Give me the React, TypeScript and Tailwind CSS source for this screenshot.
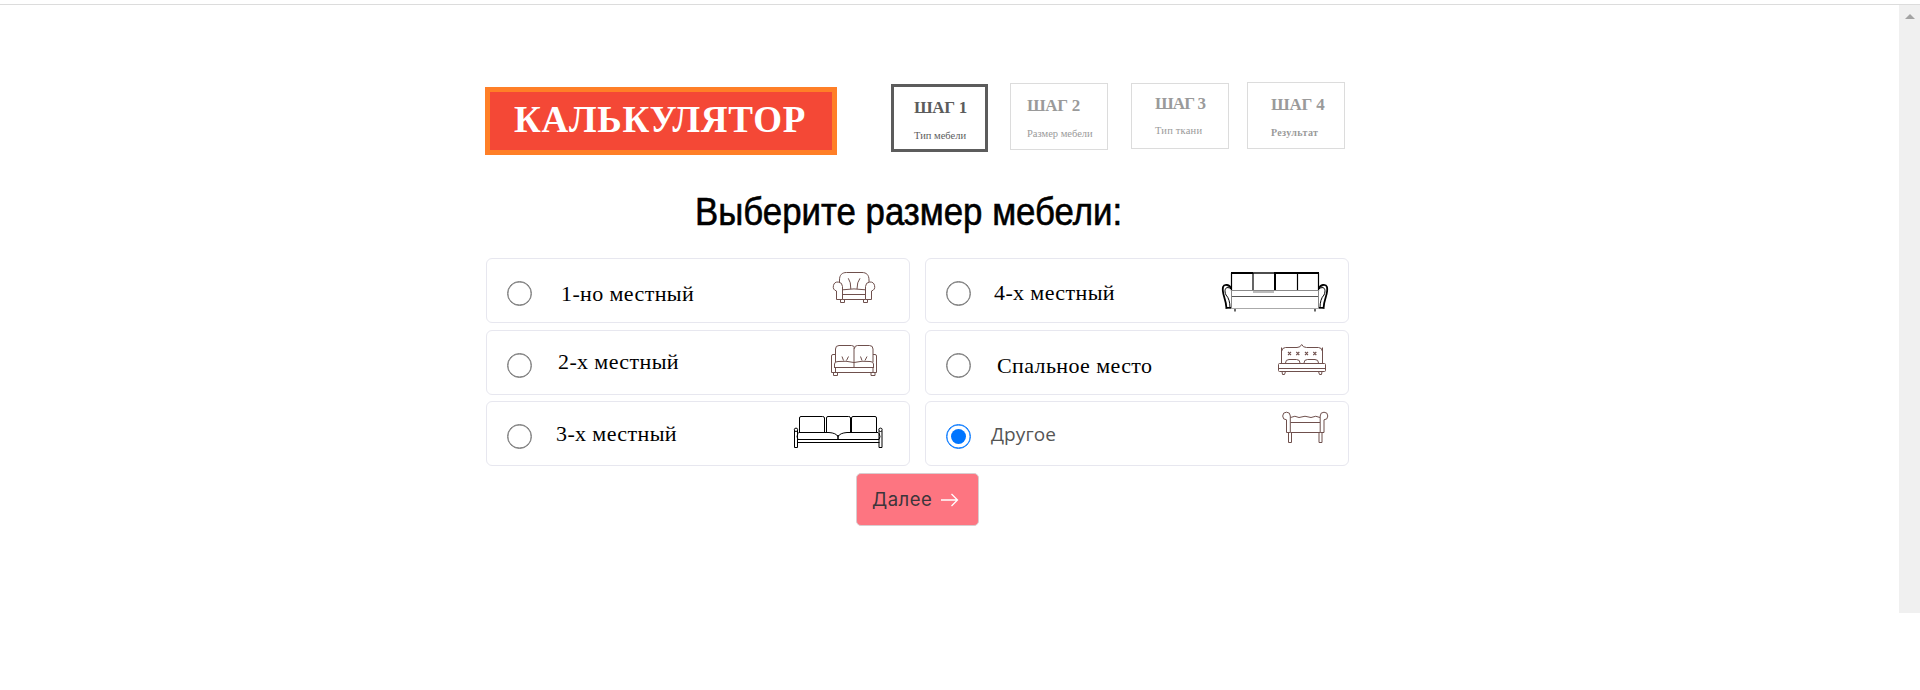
import { useState, type ReactNode } from "react";

const SERIF = "font-['Liberation_Serif',serif]";

function Armchair() {
  return (
    <svg width="44" height="33" viewBox="0 0 44 33" fill="none" stroke="#6f504d" strokeWidth="1">
      <path d="M7.500 11V9C7.500 4 10 1.500 14.500 1.500H30C34.500 1.500 37 4 37 9v2" />
      <path d="M4.500 20A4.600 4.600 0 1 1 10.500 15.500V28.500H4.500V20" />
      <path d="M39.500 20A4.600 4.600 0 1 0 33.500 15.500V28.500H39.500V20" />
      <path d="M10.500 18.800Q22 17 33.500 18.800M10.500 23.500H33.500M10.500 28.500H33.500" />
      <path d="M16.300 7.300Q19 11 18.800 18M28 7.300Q25 11 25 18" />
      <path d="M8.500 28.500V31.500H12.500V28.500M31.500 28.500V31.500H35.500V28.500" />
    </svg>
  );
}

function TwoSeater() {
  return (
    <svg width="48" height="33" viewBox="0 0 48 33" fill="none" stroke="#6f504d" strokeWidth="1">
      <path d="M5.500 18V5Q5.500 1.500 9 1.500H21.500Q24.500 1.500 24.500 4.500Q24.500 1.500 27.500 1.500H39.500Q43 1.500 43 5V18M24 4V23.500" />
      <path d="M5 10.500H3Q1.500 10.500 1.500 12V28.500H46.500V12Q46.500 10.500 45 10.500H43" />
      <path d="M4.500 24V20Q4.500 17.500 8 17.500Q16 16.500 24 18.500Q32 16.500 40 17.500Q43.500 17.500 43.500 20V24M4.500 23.500H43.500M5.500 24V28M43 24V28" />
      <path d="M12 12.500L13.500 16.500M18.500 12.500L16.500 16.500M30.500 12.500L32 16.500M37 12.500L35 16.500" />
      <path d="M3.500 28.500V31.500H7.500V28.500M41 28.500V31.500H45V28.500" />
    </svg>
  );
}

function ThreeSeater() {
  return (
    <svg width="91" height="34" viewBox="0 0 91 34" fill="none" stroke="#000" strokeWidth="1">
      <path d="M6.500 17V3Q6.500 1.500 8 1.500H29.500Q31.500 1.500 31.500 3V17M33.500 17V3Q33.500 1.500 35 1.500H55.500Q57.500 1.500 57.500 3V17M58.500 17V3Q58.500 1.500 60 1.500H82Q83.500 1.500 83.500 3V17" />
      <path d="M5 18Q3 22 5 24.500H86Q88 22 86 18M5.500 17.500H36Q43 18 45 21.500Q47 18 54 17.500H85" />
      <path d="M45 20V24.500" strokeWidth="1.500" />
      <path d="M4.500 27.500H86.500" />
      <path d="M1.500 16V32.500H4.500V16M86 16V32.500H89V16" />
      <circle cx="3" cy="14.800" r="1.700" />
      <circle cx="87.500" cy="14.800" r="1.700" />
    </svg>
  );
}

function FourSeater() {
  return (
    <svg width="110" height="43" viewBox="0 0 110 43" fill="none" stroke="#000">
      <path d="M11 3H99" strokeWidth="2" />
      <path d="M33 3H54" stroke="#999" strokeWidth="1" />
      <path d="M11.500 3V21M33 3V21M77.500 3V21M98.500 3V21" strokeWidth="1.200" />
      <path d="M55 3V21" strokeWidth="2" />
      <path d="M11 20.500H99" stroke="#8a8a8a" />
      <path d="M33 22H54" stroke="#bbb" strokeWidth="2" />
      <path d="M11 26.500H99" stroke="#555" />
      <path d="M5 38.500H105" stroke="#aaa" />
      <path d="M11.500 21V38M98.500 21V38" stroke="#888" />
      <path d="M11 19C10 14 4 14 3 17C1.500 24 6 28 6.500 38.500" strokeWidth="1.800" />
      <path d="M99 19C100 14 106 14 107 17C108.500 24 104 28 103.500 38.500" strokeWidth="1.800" />
      <path d="M9.500 18C5 16 4 21 6 25Q10 29 10 38M100.500 18C105 16 106 21 104 25Q100 29 100 38" strokeWidth="1" />
      <path d="M6 37.800H11M99 37.800H104" strokeWidth="1.500" />
      <path d="M15 39V41.500M95 39V41.500" stroke="#444" strokeWidth="1.600" />
    </svg>
  );
}

function Bed() {
  return (
    <svg width="50" height="33" viewBox="0 0 50 33" fill="none" stroke="#6f504d" strokeWidth="1">
      <path d="M4.500 4.500V20.500M45.500 4.500V20.500" />
      <path d="M4.500 8.500Q5 4.500 8.500 4.500H20Q23.500 4.500 24.700 1.500Q26 4.500 29.500 4.500H41.500Q45 4.500 45.500 8.500" />
      <path
        d="M11 9l3 3m0-3l-3 3M19.300 9l3 3m0-3l-3 3M28 9l3 3m0-3l-3 3M36.300 9l3 3m0-3l-3 3"
        strokeWidth="1.100"
      />
      <path d="M8.500 20Q8.500 16.500 12 16.500H19.500Q23 16.500 23 20M27 20Q27 16.500 30.500 16.500H38Q41.500 16.500 41.500 20" />
      <rect x="1.500" y="20.500" width="47" height="8" rx="1" />
      <path d="M1.500 25.500H48.500" />
      <path d="M5 28.500L5.500 31.500H7.500L8.500 28.500M41.500 28.500L42.500 31.500H44.500L45 28.500" />
    </svg>
  );
}

function Bench() {
  return (
    <svg width="49" height="34" viewBox="0 0 49 34" fill="none" stroke="#6f504d" strokeWidth="1">
      <path d="M5.500 9.800A3.800 3.800 0 1 1 9.300 6V22.500H5.500V9.800" />
      <path d="M43 9.800A3.800 3.800 0 1 0 39.200 6V22.500H43V9.800" />
      <path d="M9.500 7.500Q14 5 18 7.500Q24 5 30 7.500Q35 5 39 7.500M9.500 12.500H39M9.500 22.500H39" />
      <path d="M7.500 22.500V32.500H10.500V22.500M38 22.500V32.500H41V22.500" />
    </svg>
  );
}

type Step = { title: string; sub: string; box: string; titleCls: string; subCls: string };

const steps: Step[] = [
  {
    title: "ШАГ 1",
    sub: "Тип мебели",
    box: "ml-[54px] -mt-[3px] h-[68px] w-[97px] border-[3px] border-[#5c5c5c] pl-[20px] pt-[12px] text-[#5c5c5c]",
    titleCls: "text-[17px] tracking-[-0.3px]",
    subCls: "mt-[15px] text-[10.5px]",
  },
  {
    title: "ШАГ 2",
    sub: "Размер мебели",
    box: "ml-[22px] -mt-[4px] h-[67px] w-[98px] border border-[#dcdcdc] pl-[16px] pt-[13px] text-[#9a9a9a]",
    titleCls: "text-[17px] tracking-[-0.3px]",
    subCls: "mt-[15px] text-[10.5px]",
  },
  {
    title: "ШАГ 3",
    sub: "Тип ткани",
    box: "ml-[23px] -mt-[4px] h-[66px] w-[98px] border border-[#dcdcdc] pl-[23px] pt-[11px] text-[#9a9a9a]",
    titleCls: "text-[17px] tracking-[-0.9px]",
    subCls: "mt-[14px] text-[10.5px] tracking-[0.2px]",
  },
  {
    title: "ШАГ 4",
    sub: "Результат",
    box: "ml-[18px] -mt-[5px] h-[67px] w-[98px] border border-[#dcdcdc] pl-[23px] pt-[13px] text-[#9a9a9a]",
    titleCls: "text-[17px] tracking-[-0.2px]",
    subCls: "mt-[15px] text-[10px] font-bold tracking-[0.35px]",
  },
];

type Option = { label: string; labelCls: string; icon: ReactNode; iconCls: string };

const options: Option[] = [
  { label: "1-но местный", labelCls: "ml-[29px] mt-[24px]", icon: <Armchair />, iconCls: "mr-[33px] mt-[12px]" },
  { label: "4-х местный", labelCls: "ml-[23px] mt-[23px]", icon: <FourSeater />, iconCls: "mr-[18px] mt-[11px]" },
  { label: "2-х местный", labelCls: "ml-[26px] mt-[20px]", icon: <TwoSeater />, iconCls: "mr-[31px] mt-[13px]" },
  { label: "Спальное место", labelCls: "ml-[26px] mt-[24px]", icon: <Bed />, iconCls: "mr-[21px] mt-[12px]" },
  { label: "3-х местный", labelCls: "ml-[24px] mt-[21px]", icon: <ThreeSeater />, iconCls: "mr-[25px] mt-[13px]" },
  { label: "Другое", labelCls: "ml-[20px] mt-[23px]", icon: <Bench />, iconCls: "mr-[18px] mt-[8px]" },
];

export default function App() {
  const [selected, setSelected] = useState(5);

  return (
    <div className="flex h-[690px] w-full flex-col overflow-hidden bg-white">
      <div className="h-[5px] shrink-0 border-b border-[#dcdcdc]" />
      <div className="flex h-[608px] shrink-0 justify-between">
        <main className="ml-[485px] w-[880px] pt-[82px]">
          <header className={`flex h-[68px] items-start ${SERIF}`}>
            <h1 className="h-[68px] w-[352px] border-[5px] border-[#ff7f27] bg-[#f44836] pl-[24px] pt-[9px] text-[37px] leading-none font-bold tracking-[0.75px] whitespace-nowrap text-white">
              КАЛЬКУЛЯТОР
            </h1>
            {steps.map((s) => (
              <div key={s.title} className={`shrink-0 leading-none whitespace-nowrap ${s.box}`}>
                <div className={`leading-none font-bold ${s.titleCls}`}>{s.title}</div>
                <div className={`leading-none ${s.subCls}`}>{s.sub}</div>
              </div>
            ))}
          </header>

          <h2 className="mt-[38px] ml-[210px] h-[38px] origin-left scale-x-[0.916] font-['Liberation_Sans',sans-serif] text-[38px] leading-none whitespace-nowrap text-black [-webkit-text-stroke:0.6px_black]">
            Выберите размер мебели:
          </h2>

          <div className="mt-[27px] ml-px grid w-[863px] grid-cols-[424px_424px] grid-rows-[65px_65px_65px] gap-x-[15px] gap-y-[6.5px]">
            {options.map((o, i) => {
              const on = selected === i;
              return (
                <label key={o.label} className="flex items-start rounded-md border border-[#e7e7ef]">
                  <input type="radio" name="size" className="sr-only" checked={on} onChange={() => setSelected(i)} />
                  <span
                    className={`mt-[22px] ml-[20px] flex size-[25px] shrink-0 items-center justify-center rounded-full border ${on ? "border-[#0075ff] shadow-[inset_0_0_0_0.4px_#0075ff]" : "border-[#767676] shadow-[inset_0_0_0_0.4px_#767676]"}`}
                  >
                    {on && <span className="size-[15px] rounded-full bg-[#0075ff]" />}
                  </span>
                  <span
                    className={`leading-none whitespace-nowrap ${o.labelCls} ${i === 5 ? "font-['Open_Sans',sans-serif] text-[19px] tracking-[0.1px] text-[#555]" : `${SERIF} text-[22px] tracking-[0.38px] text-black`}`}
                  >
                    {o.label}
                  </span>
                  <span className={`ml-auto shrink-0 ${o.iconCls}`}>{o.icon}</span>
                </label>
              );
            })}
          </div>

          <button className="mt-[7px] ml-[371px] flex h-[53px] w-[123px] items-center rounded-[5px] border border-[#d9cccf] bg-[#fd7581] pl-[15px] font-['Inter',sans-serif] text-[18.5px] tracking-[0.5px] text-[#3b353b]">
            <span>Далее</span>
            <svg className="ml-[8px]" width="19" height="14" viewBox="0 0 19 14" fill="none" stroke="#fff" strokeWidth="1.300">
              <path d="M1 7H17.500M11.500 1L17.500 7L11.500 13" />
            </svg>
          </button>
        </main>

        <aside className="flex w-[21px] justify-center bg-[#f0f0f0] pt-[9px]">
          <svg width="10" height="5" viewBox="0 0 10 5" fill="#a3a3a3">
            <path d="M5 0L10 5H0Z" />
          </svg>
        </aside>
      </div>
    </div>
  );
}
